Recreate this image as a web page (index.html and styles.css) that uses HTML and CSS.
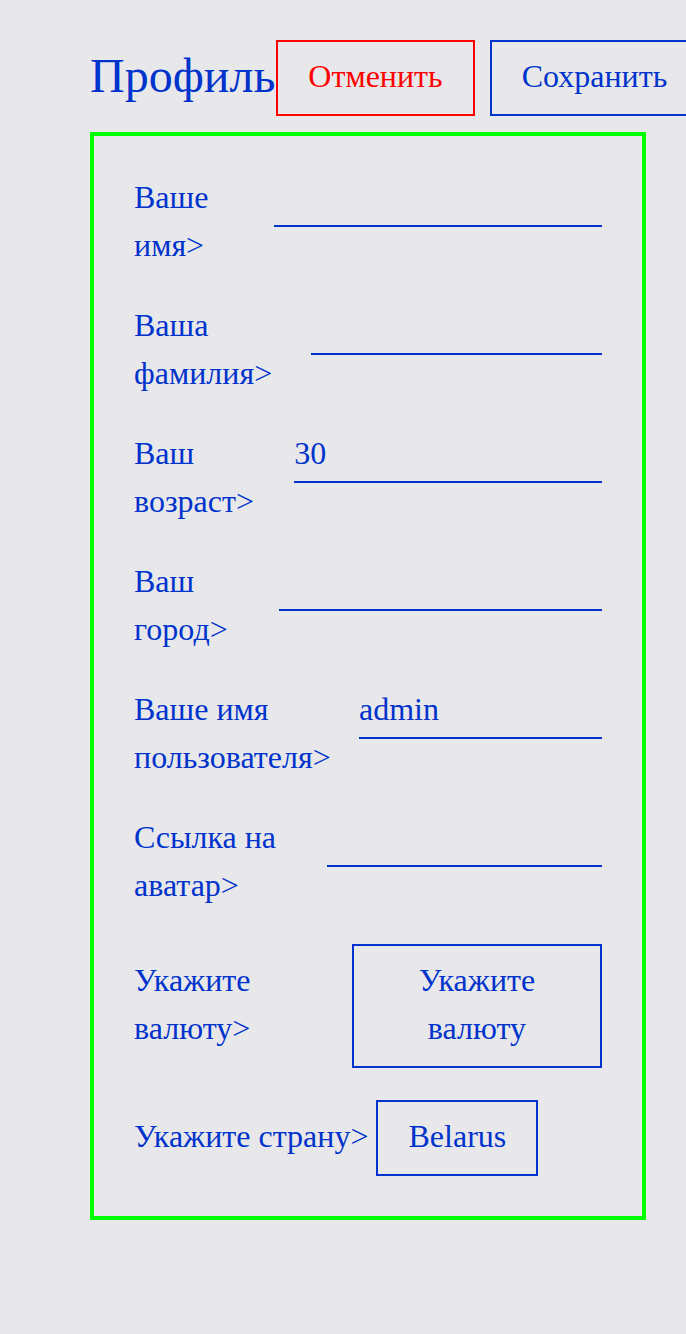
FILE: index.html
```html
<!DOCTYPE html>
<html lang="ru">
<head>
<meta charset="utf-8">
<title>Профиль</title>
<link rel="stylesheet" href="styles.css">
</head>
<body>
<div class="page">
  <header class="header">
    <h1 class="title">Профиль</h1>
    <button class="btn btn-cancel" type="button">Отменить</button>
    <button class="btn btn-save" type="button">Сохранить</button>
  </header>
  <form class="card">
    <div class="row"><label class="label">Ваше имя&gt;</label><input class="field" type="text" value=""></div>
    <div class="row"><label class="label">Ваша фамилия&gt;</label><input class="field" type="text" value=""></div>
    <div class="row"><label class="label">Ваш возраст&gt;</label><input class="field" type="text" value="30"></div>
    <div class="row"><label class="label">Ваш город&gt;</label><input class="field" type="text" value=""></div>
    <div class="row"><label class="label">Ваше имя пользователя&gt;</label><input class="field" type="text" value="admin"></div>
    <div class="row"><label class="label">Ссылка на аватар&gt;</label><input class="field" type="text" value=""></div>
    <div class="row"><label class="label">Укажите валюту&gt;</label><button class="btn btn-choice btn-currency" type="button">Укажите валюту</button></div>
    <div class="row"><label class="label">Укажите страну&gt;</label><button class="btn btn-choice" type="button">Belarus</button></div>
  </form>
</div>
</body>
</html>
```
FILE: styles.css
```css
html, body {
  margin: 0;
  background: #e8e8eb;
  overflow-x: hidden;
}
body {
  font-family: "Liberation Serif", "Times New Roman", serif;
  color: #0033cc;
}
.page {
  padding: 40px 0 0 90px;
  width: 556px;
}
.header {
  display: flex;
  align-items: center;
  height: 76px;
}
.title {
  margin: 0 1px 0 0;
  padding-bottom: 6px;
  font-size: 48px;
  font-weight: normal;
  line-height: normal;
  flex-shrink: 0;
}
.btn {
  font-family: inherit;
  font-size: 32px;
  line-height: 48px;
  padding: 10px 30px 14px;
  margin: 0;
  background: transparent;
  border: 2px solid #0033cc;
  border-radius: 0;
  color: #0033cc;
  flex-shrink: 0;
  white-space: nowrap;
}
.btn-cancel {
  border-color: #ff0000;
  color: #ff0000;
}
.btn-save {
  margin-left: 15px;
}
.card {
  margin: 16px 0 0;
  border: 4px solid #00ff00;
  padding: 40px;
  display: flex;
  flex-direction: column;
  gap: 32px;
}
.row {
  display: flex;
  align-items: baseline;
  gap: 8px;
  font-size: 32px;
  line-height: 48px;
}
.label {
  flex: 0 1 auto;
  margin: -3px 0 3px;
}
.field {
  flex: 0 1 380px;
  min-width: 0;
  box-sizing: border-box;
  height: 50px;
  font: inherit;
  line-height: 42px;
  padding: 0 0 6px;
  border: 0;
  border-bottom: 2px solid #0033cc;
  border-radius: 0;
  background: transparent;
  color: inherit;
  outline: none;
}
.btn-choice {
  flex: 0 1 auto;
  white-space: normal;
  text-align: center;
}
.btn-currency {
  padding-left: 26px;
  padding-right: 26px;
}
```
